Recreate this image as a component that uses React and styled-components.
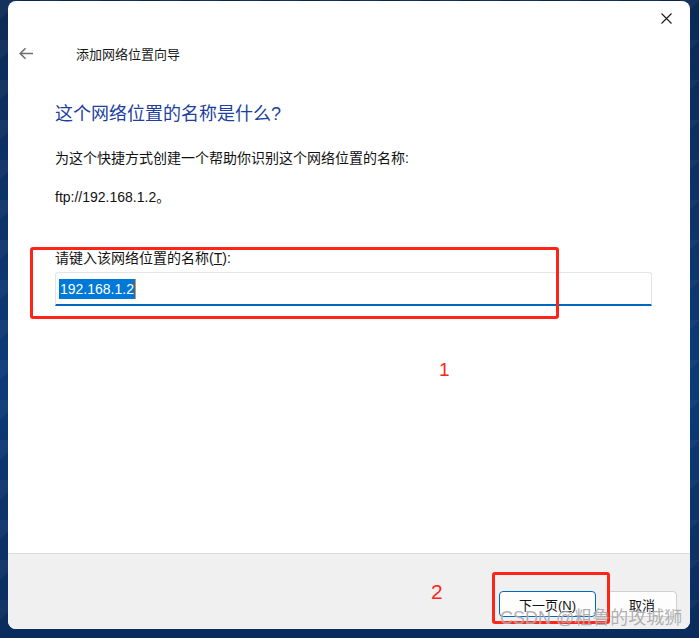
import React from "react";
import styled, { createGlobalStyle } from "styled-components";

const GlobalStyle = createGlobalStyle`
  html, body {
    margin: 0;
    padding: 0;
  }
  body {
    width: 699px;
    height: 638px;
    overflow: hidden;
    font-family: "Liberation Sans", "Noto Sans CJK SC", sans-serif;
    background:
      linear-gradient(135deg, rgba(255,255,255,0.04) 25%, transparent 25%) 0 0 / 40px 40px,
      linear-gradient(225deg, rgba(0,0,0,0.12) 25%, transparent 25%) 0 0 / 40px 40px,
      linear-gradient(180deg, #0b2a55 0%, #0d3b78 60%, #0a2c5c 100%);
  }
`;

const Desktop = styled.div`
  position: relative;
  box-sizing: border-box;
  width: 699px;
  height: 638px;
  padding: 1px 9px 9px 8px;
`;

const Window = styled.div`
  position: relative;
  height: 100%;
  display: flex;
  flex-direction: column;
  background: #fff;
  border-radius: 8px;
  overflow: hidden;
`;

const TitleBar = styled.div`
  height: 35px;
  display: flex;
  justify-content: flex-end;
  align-items: center;
  padding-right: 13px;
`;

const CloseButton = styled.button`
  border: none;
  background: transparent;
  width: 22px;
  height: 22px;
  padding: 0;
  display: flex;
  align-items: center;
  justify-content: center;
`;

const Header = styled.div`
  height: 34px;
  display: flex;
  align-items: center;
  padding-left: 8px;
  gap: 40px;
  font-size: 13px;
  color: #1a1a1a;
`;

const BackButton = styled.button`
  border: none;
  background: transparent;
  width: 20px;
  height: 20px;
  padding: 0;
  display: flex;
  align-items: center;
  justify-content: center;
`;

const Content = styled.div`
  flex: 1;
  padding-left: 47px;
  padding-right: 37px;
`;

const Heading = styled.h1`
  margin: 32px 0 0;
  font-size: 18px;
  line-height: 25px;
  font-weight: normal;
  color: #1d3fa0;
`;

const Text = styled.p`
  margin: ${(p) => p.$top}px 0 0;
  font-size: 14px;
  line-height: 20px;
  color: #111;
`;

const NameInput = styled.div`
  box-sizing: border-box;
  margin-top: 4px;
  width: 597px;
  height: 34px;
  border: 1px solid #e5e5e5;
  border-bottom: 2px solid #0067c0;
  border-radius: 3px 3px 0 0;
  display: flex;
  align-items: center;
  padding-left: 3px;
`;

const Selected = styled.span`
  background: #0078d7;
  color: #fff;
  font-size: 14px;
  line-height: 20px;
  padding: 0 1px;
  border-right: 1px solid #ff8c1a;
`;

const Footer = styled.div`
  box-sizing: border-box;
  height: 76px;
  background: #f0f0f0;
  border-top: 1px solid #dcdcdc;
  display: flex;
  justify-content: flex-end;
  align-items: flex-start;
  padding: 37px 13px 0 0;
  gap: 11px;
`;

const Button = styled.button`
  box-sizing: border-box;
  width: ${(p) => p.$w}px;
  height: 26px;
  background: #fdfdfd;
  border: 1px solid ${(p) => (p.$primary ? "#0067c0" : "#cfcfcf")};
  border-radius: 4px;
  font-family: "Liberation Sans", "Noto Sans CJK SC", sans-serif;
  font-size: 13px;
  color: #111;
  padding: 0;
  u {
    text-decoration: underline;
  }
`;

const RedBox = styled.div`
  position: absolute;
  left: ${(p) => p.$x}px;
  top: ${(p) => p.$y}px;
  width: ${(p) => p.$w}px;
  height: ${(p) => p.$h}px;
  box-sizing: border-box;
  border: 3px solid #ff2418;
  border-radius: 3px;
  pointer-events: none;
`;

const Mark = styled.span`
  position: absolute;
  left: ${(p) => p.$x}px;
  top: ${(p) => p.$y}px;
  font-size: ${(p) => p.$size}px;
  color: #ff2418;
  line-height: 1;
`;

const Watermark = styled.span`
  position: absolute;
  left: 500px;
  top: 606px;
  font-size: 18px;
  line-height: 24px;
  color: rgba(150, 150, 150, 0.75);
  text-shadow: 0 0 1px rgba(255, 255, 255, 0.6);
  white-space: nowrap;
  pointer-events: none;
`;

export default function App() {
  return (
    <>
      <GlobalStyle />
      <Desktop>
        <Window>
          <TitleBar>
            <CloseButton aria-label="关闭">
              <svg width="11" height="11" viewBox="0 0 11 11">
                <path d="M0.5 0.5L10.5 10.5M10.5 0.5L0.5 10.5" stroke="#1a1a1a" strokeWidth="1.1" />
              </svg>
            </CloseButton>
          </TitleBar>
          <Header>
            <BackButton aria-label="返回">
              <svg width="15" height="13" viewBox="0 0 15 13">
                <path d="M14 6.5H1.5M6.5 1.2L1.2 6.5L6.5 11.8" stroke="#707070" strokeWidth="1.6" fill="none" />
              </svg>
            </BackButton>
            <span>添加网络位置向导</span>
          </Header>
          <Content>
            <Heading>这个网络位置的名称是什么?</Heading>
            <Text $top={21}>为这个快捷方式创建一个帮助你识别这个网络位置的名称:</Text>
            <Text $top={19}>ftp://192.168.1.2。</Text>
            <Text $top={41}>
              请键入该网络位置的名称(<u>T</u>):
            </Text>
            <NameInput>
              <Selected>192.168.1.2</Selected>
            </NameInput>
          </Content>
          <Footer>
            <Button $primary $w={97}>
              下一页(<u>N</u>)
            </Button>
            <Button $w={70}>取消</Button>
          </Footer>
          <RedBox $x={22} $y={246} $w={529} $h={72} />
          <Mark $x={431} $y={359} $size={19}>1</Mark>
          <Mark $x={423} $y={580} $size={21}>2</Mark>
          <RedBox $x={484} $y={571} $w={118} $h={52} />
        </Window>
        <Watermark>CSDN @粗鲁的攻城狮</Watermark>
      </Desktop>
    </>
  );
}
